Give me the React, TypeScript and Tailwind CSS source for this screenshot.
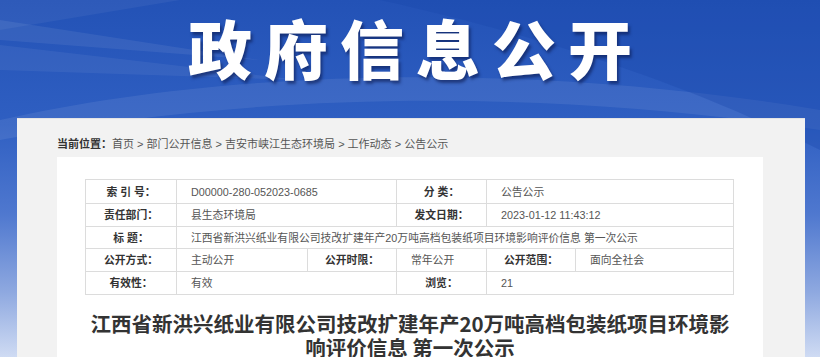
import React from "react";

const label = "border border-[#dcdcdc] text-center font-bold text-[#333] whitespace-nowrap";
const value = "border border-[#dcdcdc] text-left pl-[14px] text-[#555] whitespace-nowrap";

export default function App() {
  return (
    <div
      className="relative w-[820px] h-[357px] overflow-hidden bg-[linear-gradient(to_bottom,#2352b6_0%,#2f5fc2_35%,#4f78cf_60%,#8fa9e0_82%,#cfdbf3_100%)]"
      style={{ fontFamily: '"Liberation Sans", "Noto Sans CJK SC", sans-serif' }}
    >
      {/* banner waves */}
      <svg className="absolute left-0 top-0" width="820" height="357" viewBox="0 0 820 357">
        <path d="M0 20 L260 60 L0 40 Z" fill="#ffffff" opacity="0.07" />
        <path d="M0 45 L300 80 L0 70 Z" fill="#ffffff" opacity="0.06" />
        <path d="M0 0 L180 0 L0 30 Z" fill="#ffffff" opacity="0.05" />
        <path d="M0 120 C220 70 520 60 820 110 L820 130 C520 85 240 95 0 140 Z" fill="#ffffff" opacity="0.08" />
        <path d="M380 0 C560 40 700 90 820 150 L820 0 Z" fill="#1a47ad" opacity="0.35" />
      </svg>

      <div className="relative flex h-[118px] items-start justify-center pt-[6px]">
        <h1
          className="text-[64px] leading-[80px] font-black tracking-[12px] text-white pl-[12px] [text-shadow:2px_3px_3px_rgba(10,20,70,0.55)]"
          style={{ fontFamily: '"Noto Sans CJK SC", sans-serif' }}
        >
          政府信息公开
        </h1>
      </div>

      <div className="relative ml-[17px] w-[788px] h-[260px] bg-[#f2f2f2] border-t border-[#e4e4e4]">
        <div className="pl-[40px] pt-[18px] text-[11px] leading-[14px] text-[#555] whitespace-nowrap">
          <span className="font-bold text-[#333]">当前位置：</span>
          <span>首页 &gt; 部门公开信息 &gt; 吉安市峡江生态环境局 &gt; 工作动态 &gt; 公告公示</span>
        </div>

        <div className="ml-[40px] mt-[6px] w-[706px] h-[220px] bg-white pt-[22px] px-[28px]">
          <table className="w-[648px] table-fixed border-collapse text-[10.8px] leading-[14px]">
            <colgroup>
              <col className="w-[91px]" />
              <col className="w-[131px]" />
              <col className="w-[89px]" />
              <col className="w-[90px]" />
              <col className="w-[89px]" />
              <col className="w-[158px]" />
            </colgroup>
            <tbody>
              <tr className="h-[24px]">
                <td className={label}>索 引 号：</td>
                <td className={value} colSpan={2}>D00000-280-052023-0685</td>
                <td className={label}>分 类：</td>
                <td className={value} colSpan={2}>公告公示</td>
              </tr>
              <tr className="h-[23px]">
                <td className={label}>责任部门：</td>
                <td className={value} colSpan={2}>县生态环境局</td>
                <td className={label}>发文日期：</td>
                <td className={value} colSpan={2}>2023-01-12 11:43:12</td>
              </tr>
              <tr className="h-[22px]">
                <td className={label}>标 题：</td>
                <td className={value} colSpan={5}>江西省新洪兴纸业有限公司技改扩建年产20万吨高档包装纸项目环境影响评价信息 第一次公示</td>
              </tr>
              <tr className="h-[23px]">
                <td className={label}>公开方式：</td>
                <td className={value}>主动公开</td>
                <td className={label}>公开时限：</td>
                <td className={value}>常年公开</td>
                <td className={label}>公开范围：</td>
                <td className={value}>面向全社会</td>
              </tr>
              <tr className="h-[23px]">
                <td className={label}>有效性：</td>
                <td className={value} colSpan={2}>有效</td>
                <td className={label}>浏览：</td>
                <td className={value} colSpan={2}>21</td>
              </tr>
            </tbody>
          </table>

          <h2
            className="mt-[16px] text-center text-[20.5px] leading-[24px] font-bold text-[#333]"
            style={{ fontFamily: '"Noto Sans CJK SC", sans-serif' }}
          >
            江西省新洪兴纸业有限公司技改扩建年产20万吨高档包装纸项目环境影
            <br />
            响评价信息 第一次公示
          </h2>
        </div>
      </div>
    </div>
  );
}
